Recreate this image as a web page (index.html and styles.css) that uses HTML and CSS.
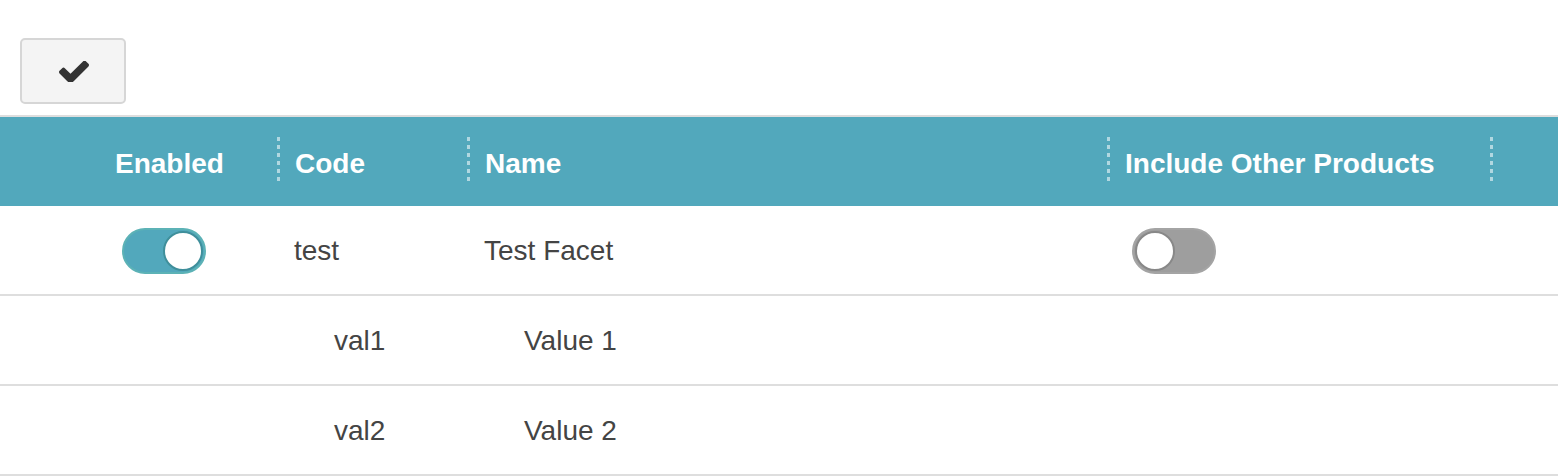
FILE: index.html
```html
<!DOCTYPE html>
<html>
<head>
<meta charset="utf-8">
<link rel="stylesheet" href="styles.css">
</head>
<body>
<div class="toolbar">
  <button class="btn-check" type="button" aria-label="Save">
    <svg width="30" height="21" viewBox="121 370 1550 1056" aria-hidden="true"><path fill="#333" d="M1671 566q0 40-28 68l-724 724-136 136q-28 28-68 28t-68-28l-136-136-362-362q-28-28-28-68t28-68l136-136q28-28 68-28t68 28l294 295 656-657q28-28 68-28t68 28l136 136q28 28 28 68z"/></svg>
  </button>
</div>
<div class="grid">
  <div class="row head">
    <div class="cell c-exp"></div>
    <div class="cell c-en">Enabled</div>
    <div class="cell c-code sep">Code</div>
    <div class="cell c-name sep">Name</div>
    <div class="cell c-inc sep">Include Other Products</div>
    <div class="cell c-end sep"></div>
  </div>
  <div class="row body-row">
    <div class="cell c-exp"></div>
    <div class="cell c-en"><span class="toggle on"><span class="knob"></span></span></div>
    <div class="cell c-code">test</div>
    <div class="cell c-name">Test Facet</div>
    <div class="cell c-inc"><span class="toggle off"><span class="knob"></span></span></div>
    <div class="cell c-end"></div>
  </div>
  <div class="row body-row child">
    <div class="cell c-exp"></div>
    <div class="cell c-en"></div>
    <div class="cell c-code">val1</div>
    <div class="cell c-name">Value 1</div>
    <div class="cell c-inc"></div>
    <div class="cell c-end"></div>
  </div>
  <div class="row body-row child">
    <div class="cell c-exp"></div>
    <div class="cell c-en"></div>
    <div class="cell c-code">val2</div>
    <div class="cell c-name">Value 2</div>
    <div class="cell c-inc"></div>
    <div class="cell c-end"></div>
  </div>
</div>
</body>
</html>
```

FILE: styles.css
```css
* { box-sizing: border-box; }
html, body { margin: 0; padding: 0; background: #fff; }
body {
  font-family: "Liberation Sans", Arial, sans-serif;
  color: #444;
  font-size: 28px;
}
.toolbar {
  padding: 38px 0 0 20px;
  height: 115px;
}
.btn-check {
  width: 106px;
  height: 66px;
  background: #f4f4f4;
  border: 2px solid #d6d6d6;
  border-radius: 5px;
  display: flex;
  align-items: center;
  justify-content: center;
  padding: 0;
  margin: 0;
}
.btn-check svg { display: block; margin-left: 2px; }
.grid { width: 1558px; }
.row {
  display: grid;
  grid-template-columns: 97px 180px 190px 640px 383px 68px;
  height: 90px;
  border-bottom: 2px solid #dedede;
  align-items: center;
}
.row.head {
  height: 91px;
  background: #52a8bc;
  border-top: 2px solid #dedede;
  border-bottom: 0;
  color: #fff;
  font-weight: bold;
}
.cell { height: 100%; display: flex; align-items: center; white-space: nowrap; }
.head .cell { padding-left: 18px; padding-top: 4px; }
.head .c-exp { padding-left: 0; }
.head .sep { position: relative; }
.head .sep::before {
  content: "";
  position: absolute;
  left: 0;
  top: 20px;
  width: 3px;
  height: 46px;
  background: repeating-linear-gradient(to bottom, rgba(255,255,255,0.55) 0 4px, transparent 4px 8px);
}
.body-row .cell { padding-top: 2px; }
.body-row .c-code, .body-row .c-name { padding-left: 17px; }
.body-row.child .c-code, .body-row.child .c-name { padding-left: 57px; }
.body-row .c-en, .body-row .c-inc { padding-left: 25px; padding-top: 0; }
.toggle {
  display: block;
  width: 84px;
  height: 46px;
  border-radius: 23px;
  position: relative;
  margin-top: 2px;
}
.toggle.on { background: #52a8bc; border: 2px solid #5cb2b6; }
.toggle.off { background: #9e9e9e; border: 2px solid #a4a4a4; }
.knob {
  position: absolute;
  top: 1px;
  width: 40px;
  height: 40px;
  border-radius: 50%;
  background: #fff;
}
.toggle.on .knob { right: 1px; border: 2px solid #3f8f9b; }
.toggle.off .knob { left: 1px; border: 2px solid #888; }
```
